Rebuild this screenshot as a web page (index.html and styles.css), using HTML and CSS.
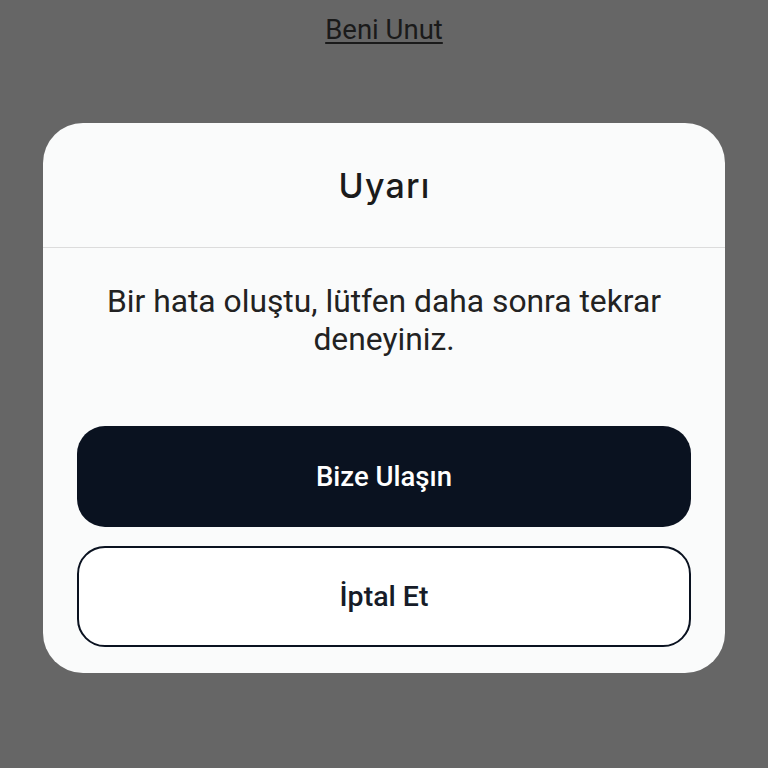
FILE: index.html
```html
<!DOCTYPE html>
<html lang="tr">
<head>
<meta charset="utf-8">
<link rel="stylesheet" href="styles.css">
</head>
<body>
<div class="top"><a class="forget" href="#">Beni Unut</a></div>
<div class="modal">
  <div class="modal-head"><span class="title">Uyarı</span></div>
  <div class="modal-body">
    <p class="msg">Bir hata oluştu, lütfen daha sonra tekrar deneyiniz.</p>
    <div class="actions">
      <button class="btn btn-primary">Bize Ulaşın</button>
      <button class="btn btn-outline">İptal Et</button>
    </div>
  </div>
</div>
</body>
</html>
```

FILE: styles.css
```css
html, body {
  margin: 0;
  padding: 0;
  background: #666666;
  height: 100%;
}
body {
  font-family: Roboto, "Liberation Sans", sans-serif;
}
.top {
  text-align: center;
  padding-top: 13px;
  height: 123px;
  box-sizing: border-box;
}
.forget {
  color: #1a1a1a;
  font-size: 27.5px;
  line-height: 34px;
  text-decoration: underline;
  text-underline-offset: 3px;
}
.modal {
  width: 682px;
  margin: 0 auto;
  background: #fafbfb;
  border-radius: 40px;
  overflow: hidden;
}
.modal-head {
  height: 125px;
  display: flex;
  align-items: center;
  justify-content: center;
  border-bottom: 1.5px solid #dcdcdc;
  box-sizing: border-box;
}
.title {
  font-family: Inter, "Noto Sans", sans-serif;
  font-weight: 500;
  font-size: 34px;
  letter-spacing: 1.2px;
  margin-right: -1.2px;
  color: #1b1b1b;
}
.modal-body {
  padding: 34px 34px 26px;
}
.msg {
  margin: 0 0 68px;
  text-align: center;
  font-size: 31.8px;
  line-height: 38px;
  color: #222222;
}
.actions {
  display: flex;
  flex-direction: column;
  gap: 19px;
}
.btn {
  height: 101px;
  border-radius: 28px;
  font-family: Roboto, "Liberation Sans", sans-serif;
  font-weight: 500;
  font-size: 27.5px;
  cursor: pointer;
}
.btn-primary {
  background: #0a1220;
  color: #ffffff;
  border: none;
}
.btn-outline {
  background: #ffffff;
  color: #161c28;
  border: 2px solid #0a1220;
  font-size: 28.5px;
}
```
